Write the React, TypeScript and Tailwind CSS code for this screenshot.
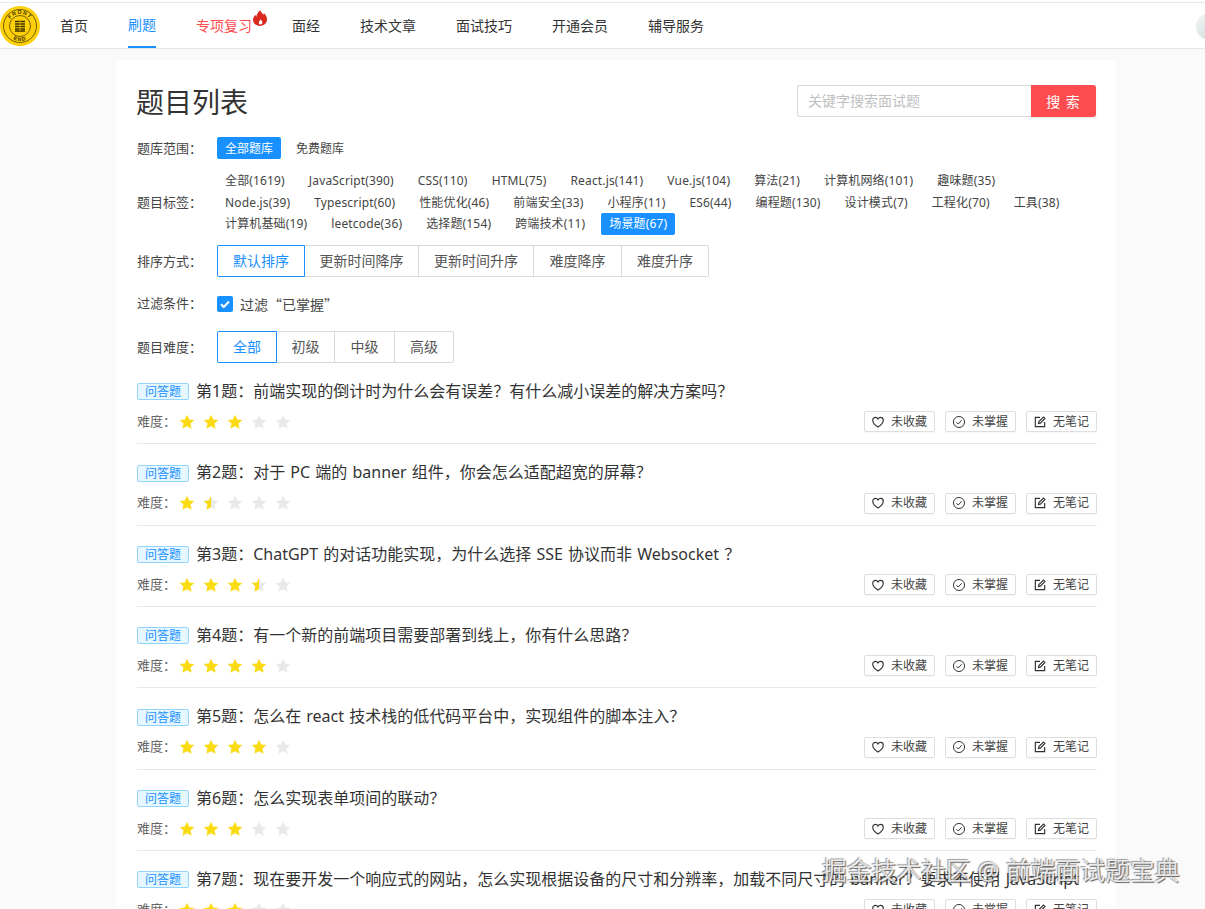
import React from "react";

const C = "\uFF1A";
const D = "\uFF0C";
const Q = "\uFF1F";
const NAV = ["首页", "刷题", "专项复习", "面经", "技术文章", "面试技巧", "开通会员", "辅导服务"];
const TAGS = [
  ["全部(1619)", "JavaScript(390)", "CSS(110)", "HTML(75)", "React.js(141)", "Vue.js(104)", "算法(21)", "计算机网络(101)", "趣味题(35)"],
  ["Node.js(39)", "Typescript(60)", "性能优化(46)", "前端安全(33)", "小程序(11)", "ES6(44)", "编程题(130)", "设计模式(7)", "工程化(70)", "工具(38)"],
  ["计算机基础(19)", "leetcode(36)", "选择题(154)", "跨端技术(11)", "场景题(67)"],
];
const QUESTIONS: [string, number][] = [
  [`第1题${C}前端实现的倒计时为什么会有误差${Q}有什么减小误差的解决方案吗${Q}`, 3],
  [`第2题${C}对于 PC 端的 banner 组件${D}你会怎么适配超宽的屏幕${Q}`, 1.5],
  [`第3题${C}ChatGPT 的对话功能实现${D}为什么选择 SSE 协议而非 Websocket ${Q}`, 3.5],
  [`第4题${C}有一个新的前端项目需要部署到线上${D}你有什么思路${Q}`, 4],
  [`第5题${C}怎么在 react 技术栈的低代码平台中${D}实现组件的脚本注入${Q}`, 4],
  [`第6题${C}怎么实现表单项间的联动${Q}`, 3],
  [`第7题${C}现在要开发一个响应式的网站${D}怎么实现根据设备的尺寸和分辨率${D}加载不同尺寸的 banner${Q}要求不使用 JavaScript`, 3],
];
const STAR = "M12 1.2l3.3 7 7.7.9-5.700 5.300 1.600 7.600L12 18.200l-6.900 3.800 1.600-7.600L1 9.100l7.700-.9z";
const LABEL = "text-[13px] text-[#444] w-[80px] shrink-0";

function Star({ fill }: { fill: "full" | "half" | "none" }) {
  return (
    <svg viewBox="0 0 24 24" className="w-4 h-4 block">
      <path d={STAR} fill={fill === "full" ? "#fadb14" : "#e9e9e9"} />
      {fill === "half" && <path d={STAR} fill="#fadb14" style={{ clipPath: "inset(0 50% 0 0)" }} />}
    </svg>
  );
}

function Logo() {
  return (
    <svg viewBox="0 0 40 40" className="w-10 h-10 shrink-0">
      <defs>
        <path id="logoTop" d="M8 20a12 12 0 0 1 24 0" />
        <path id="logoBot" d="M5 20a15 15 0 0 0 30 0" />
      </defs>
      <circle cx="20" cy="20" r="20" fill="#fdd00a" />
      <circle cx="20" cy="20" r="16.500" fill="none" stroke="#3a3000" strokeWidth="0.700" />
      <circle cx="20" cy="20" r="10.500" fill="none" stroke="#3a3000" strokeWidth="0.700" />
      <text fontSize="5.200" fontWeight="700" fill="#3a3000" fontFamily="'Liberation Sans',sans-serif" letterSpacing="1">
        <textPath href="#logoTop" startOffset="50%" textAnchor="middle">FRONT</textPath>
      </text>
      <text fontSize="5.200" fontWeight="700" fill="#3a3000" fontFamily="'Liberation Sans',sans-serif" letterSpacing="1">
        <textPath href="#logoBot" startOffset="50%" textAnchor="middle">END</textPath>
      </text>
      <path d="M15 15.500h10M15 18h10M15 20.500h10M15 23h10M15 25h10" stroke="#3a3000" strokeWidth="1.300" />
      <path d="M20 15v10" stroke="#fdd00a" strokeWidth="0.700" />
    </svg>
  );
}

function Flame() {
  return (
    <svg viewBox="0 0 16 18" className="absolute left-[57px] top-[7px] w-[14px] h-[16px]">
      <path
        fill="#d9281e"
        d="M8.500 0c.6 2.600 2.200 3.500 3.600 5.200.3-.6.4-1.200.3-1.900C14.600 5.300 16 7.700 16 10.500 16 14.800 12.700 18 8 18s-8-3-8-7c0-2.700 1.500-4.300 2.800-5.800.1 1 .4 1.800 1 2.400C4.100 4.600 5.800 1.800 8.500 0zM8.800 10.500c-.3 1.200-2.200 2-2.200 3.900 0 1.300.9 2 2 2s2.200-.9 2.200-2.200c0-1.700-1.600-2.300-2-3.700z"
        fillRule="evenodd"
      />
    </svg>
  );
}

function SegGroup({ items, widths }: { items: string[]; widths: string[] }) {
  return (
    <div className="flex h-8 text-[14px]">
      {items.map((t, i) => (
        <div
          key={t}
          className={
            "flex items-center justify-center h-8 pb-[1px] border " +
            widths[i] +
            (i === 0
              ? " border-[#1890ff] text-[#1890ff] rounded-l-[2px]"
              : " border-[#d9d9d9] border-l-0 text-[#555] last:rounded-r-[2px]")
          }
        >
          {t}
        </div>
      ))}
    </div>
  );
}

function ActionBtn({ icon, label }: { icon: React.ReactNode; label: string }) {
  return (
    <div className="flex items-center justify-center gap-[6px] w-[71px] h-[21px] border border-[#dedede] rounded-[2px] bg-white text-[12px] text-[#444] shadow-[0_1px_1px_rgba(0,0,0,0.03)] pr-[1px]">
      {icon}
      <span>{label}</span>
    </div>
  );
}

const HeartIcon = (
  <svg viewBox="0 0 24 24" className="w-[14px] h-[14px]" fill="none" stroke="#333" strokeWidth="2">
    <path d="M12 20.500S3 15 3 8.800C3 5.900 5.200 4 7.600 4c1.900 0 3.500 1 4.400 2.700C12.900 5 14.500 4 16.400 4 18.800 4 21 5.900 21 8.800 21 15 12 20.500 12 20.500z" />
  </svg>
);
const CheckIcon = (
  <svg viewBox="0 0 24 24" className="w-[14px] h-[14px]" fill="none" stroke="#333" strokeWidth="1.700">
    <circle cx="12" cy="12" r="9.500" />
    <path d="M7.500 12.300l3.200 3.200 5.800-6.500" />
  </svg>
);
const EditIcon = (
  <svg viewBox="0 0 24 24" className="w-[14px] h-[14px]" fill="none" stroke="#333" strokeWidth="2">
    <path d="M12 4H4v16h16v-8" />
    <path d="M9.500 14.500l.6-3.200L18 3.500l2.500 2.500-7.800 7.900z" />
  </svg>
);

function Question({ title, stars }: { title: string; stars: number }) {
  return (
    <div className="h-[81.330px] shrink-0 flex flex-col">
      <div className="flex items-center h-[17px] gap-[7px]">
        <span className="flex items-center justify-center w-[52px] h-[17px] pt-[1px] border border-[#91d5ff] bg-[#e6f7ff] text-[#1890ff] rounded-[2px] text-[12px]">
          问答题
        </span>
        <span className="text-[16px] text-[#333] whitespace-nowrap -translate-y-[1px] [word-spacing:1px]">{title}</span>
      </div>
      <div className="flex items-center justify-between mt-[11px] h-[21px]">
        <div className="flex items-center">
          <span className="text-[13px] text-[#666] w-[42px]">{`难度${C}`}</span>
          <div className="flex gap-2">
            {[1, 2, 3, 4, 5].map((n) => (
              <Star key={n} fill={stars >= n ? "full" : stars >= n - 0.5 ? "half" : "none"} />
            ))}
          </div>
        </div>
        <div className="flex gap-[10px]">
          <ActionBtn icon={HeartIcon} label="未收藏" />
          <ActionBtn icon={CheckIcon} label="未掌握" />
          <ActionBtn icon={EditIcon} label="无笔记" />
        </div>
      </div>
      <div className="border-b border-[#e8e8e8] mt-[11px]" />
    </div>
  );
}

export default function App() {
  return (
    <div className="relative h-[909px] overflow-hidden bg-[#fafafa] font-['Noto_Sans','Noto_Sans_CJK_SC',sans-serif] text-[#333]">
      <div className="h-[2px] bg-white" />
      <header className="relative flex items-center h-[47px] bg-white border-t border-b border-[#e4e6e8]">
        <Logo />
        <nav className="flex items-center h-full ml-5 gap-10 text-[14px]">
          {NAV.map((n) => (
            <div
              key={n}
              className={
                "relative flex items-center h-full whitespace-nowrap " +
                (n === "刷题"
                  ? "text-[#1890ff] border-b-[2px] border-[#1890ff]"
                  : n === "专项复习"
                  ? "text-[#ff4d4f]"
                  : "text-[#333]")
              }
            >
              {n}
              {n === "专项复习" && <Flame />}
            </div>
          ))}
        </nav>
        <div className="absolute right-[-18px] top-[10px] w-[27px] h-[27px] rounded-full bg-[linear-gradient(135deg,#f4f6f6,#c9d6d8)]" />
      </header>

      <main className="w-[1000px] ml-[116px] mt-[11px] bg-white rounded-[6px] pl-[21px] pr-[19px] pt-[25px] h-[900px]">
        <div className="flex items-center justify-between h-[32px]">
          <h1 className="text-[28px] leading-[32px] font-normal text-[#333] mt-[2px] -ml-[1px]">题目列表</h1>
          <div className="flex w-[299px] h-[32px] mr-[1px]">
            <div className="flex-1 flex items-center pl-[10px] pb-[1px] border border-[#d9d9d9] border-r-0 rounded-l-[3px] text-[14px] text-[#bfbfbf]">
              关键字搜索面试题
            </div>
            <div className="flex items-center justify-center w-[65px] bg-[#ff4d4f] text-white text-[14px] tracking-[1px] rounded-r-[3px] shadow-[0_1px_2px_rgba(0,0,0,0.1)]">
              搜 索
            </div>
          </div>
        </div>

        <div className="flex items-center mt-[20px] h-[22px]">
          <span className={LABEL + " pt-[1px]"}>{`题库范围${C}`}</span>
          <span className="flex items-center justify-center w-[64px] h-[22px] pt-[1px] bg-[#1890ff] rounded-[2px] text-white text-[12px]">全部题库</span>
          <span className="ml-[15px] pt-[1px] text-[12px] text-[#444]">免费题库</span>
        </div>

        <div className="flex items-center mt-[11px]">
          <span className={LABEL}>{`题目标签${C}`}</span>
          <div className="flex flex-col">
            {TAGS.map((row, i) => (
              <div key={i} className="flex items-center h-[21.700px] gap-[8px] text-[12px] tracking-[0.15px] text-[#444] whitespace-nowrap">
                {row.map((t) => (
                  <span
                    key={t}
                    className={
                      "flex items-center h-[22px] px-2 rounded-[2px] " +
                      (t === "场景题(67)" ? "bg-[#1890ff] text-white" : "")
                    }
                  >
                    {t}
                  </span>
                ))}
              </div>
            ))}
          </div>
        </div>

        <div className="flex items-center mt-[10px]">
          <span className={LABEL + " pt-[1px]"}>{`排序方式${C}`}</span>
          <SegGroup
            items={["默认排序", "更新时间降序", "更新时间升序", "难度降序", "难度升序"]}
            widths={["w-[88px]", "w-[114px]", "w-[115px]", "w-[88px]", "w-[87px]"]}
          />
        </div>

        <div className="flex items-center mt-[19px] h-[16px]">
          <span className={LABEL}>{`过滤条件${C}`}</span>
          <span className="flex items-center justify-center w-4 h-4 rounded-[2px] bg-[#1890ff]">
            <svg viewBox="0 0 16 16" className="w-4 h-4" fill="none" stroke="#fff" strokeWidth="2">
              <path d="M4 8.200l2.800 2.800L12 5.500" />
            </svg>
          </span>
          <span className="ml-[7px] text-[14px] text-[#444] font-['Noto_Sans_CJK_SC',sans-serif]">过滤“已掌握”</span>
        </div>

        <div className="flex items-center mt-[19px]">
          <span className={LABEL + " pt-[1px]"}>{`题目难度${C}`}</span>
          <SegGroup items={["全部", "初级", "中级", "高级"]} widths={["w-[60px]", "w-[58px]", "w-[60px]", "w-[59px]"]} />
        </div>

        <div className="flex flex-col mt-[20.300px]">
          {QUESTIONS.map(([t, s]) => (
            <Question key={t} title={t} stars={s} />
          ))}
        </div>
      </main>

      <div className="absolute left-[822px] top-[854px] text-[24.800px] leading-[32px] whitespace-nowrap text-white/80 [text-shadow:1px_1px_1px_rgba(60,60,60,0.8),-1px_-1px_1px_rgba(60,60,60,0.5)]">
        掘金技术社区 @ 前端面试题宝典
      </div>
    </div>
  );
}
